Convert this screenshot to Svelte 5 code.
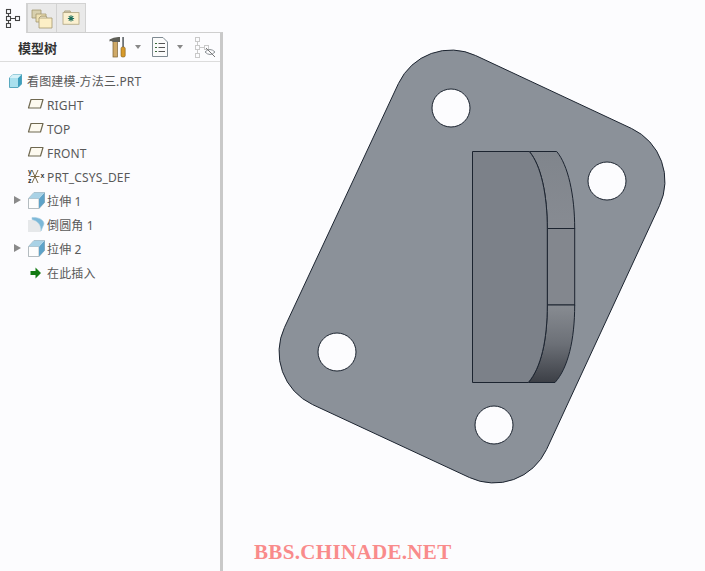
<script>
  const rows = [
    { label: '看图建模-方法三.PRT', icon: 'part', root: true },
    { label: 'RIGHT', icon: 'plane' },
    { label: 'TOP', icon: 'plane' },
    { label: 'FRONT', icon: 'plane' },
    { label: 'PRT_CSYS_DEF', icon: 'csys' },
    { label: '拉伸 1', icon: 'extrude', arrow: true },
    { label: '倒圆角 1', icon: 'round' },
    { label: '拉伸 2', icon: 'extrude', arrow: true },
    { label: '在此插入', icon: 'insert' }
  ];

  const holes = [[451, 108], [607, 181], [337, 352], [494, 425]];
</script>

{#snippet treeIcon(name)}
  <svg class="ticon" width="20" height="18" viewBox="0 0 20 18">
    {#if name === 'part'}
      <path d="M2.5 6 L6 2.5 H14.5 V12 L11 15.5 H2.5 Z" fill="#a9e0ee" stroke="#5aa9bf" stroke-linejoin="round" />
      <path d="M11 6 L14.5 2.5 V12 L11 15.5 Z" fill="#3f9fbd" />
      <path d="M2.5 6 H11 L14.5 2.5 H6 Z" fill="#d5f1f8" />
    {:else if name === 'plane'}
      <path d="M4 3.5 H16 L13.5 12 H1.5 Z" fill="#fdfaf0" stroke="#6f6850" stroke-width="1.2" stroke-linejoin="round" />
    {:else if name === 'csys'}
      <path d="M5 2 L11 15 M11 2 L5 15 M3.5 8.5 H12.5" stroke="#7a6a48" stroke-width="1" fill="none" />
      <text x="1" y="6" class="axis">y</text>
      <text x="1" y="15" class="axis">z</text>
      <text x="13.5" y="10" class="axis">x</text>
    {:else if name === 'extrude'}
      <path d="M1.5 6.5 L7 0.5 H17.5 V10.5 L12 16.5 H1.5 Z" fill="#fafafa" stroke="#a9b3b8" />
      <path d="M1.5 6.5 H12 V16.5 H1.5 Z" fill="#fdfdfd" stroke="#b4bcc0" />
      <path d="M12 6.5 L17.5 0.5 V10.5 L12 16.5 Z" fill="#5ea3c9" />
      <path d="M1.5 6.5 L7 0.5 H17.5 L12 6.5 Z" fill="#a9d2e6" />
    {:else if name === 'round'}
      <path d="M1 4 H8 C12 4 14 9 14 16 H1 Z" fill="#e6e8ea" />
      <path d="M5 1.5 C11 1 17 3.5 17 8 L14 15 C14 9 11 5 5 3.5 Z" fill="#7db8d8" stroke="#a8cfe2" stroke-width="0.6" />
    {:else if name === 'insert'}
      <path d="M3.5 7 H8.5 V3.5 L14 9 L8.5 14.5 V11 H3.5 Z" fill="#127a12" />
    {/if}
  </svg>
{/snippet}

<div class="page">
  <aside class="side">
    <div class="tabs">
      <div class="tab active">
        <svg width="16" height="20" viewBox="0 0 16 20" fill="none" stroke="#444" stroke-width="1.1">
          <rect x="1.5" y="1.5" width="4" height="4" />
          <rect x="1.5" y="8.5" width="4" height="4" />
          <rect x="1.5" y="15.5" width="4" height="4" />
          <rect x="10.5" y="8.5" width="4" height="4" />
          <path d="M3.5 5.5 V8.5 M3.5 12.5 V15.5 M5.5 10.5 H10.5" />
        </svg>
      </div>
      <div class="tab">
        <svg width="22" height="22" viewBox="0 0 22 22" stroke="#a3976f" stroke-width="0.8">
          <path d="M1 3 H10 V11 H1 Z" fill="#d8d0ae" />
          <path d="M5 7 H15 V15 H5 Z" fill="#efe2b4" />
          <path d="M8 11 H21 V21 H8 Z" fill="#fcefc6" />
          <path d="M8 11 L10 9 H15 L16 11" fill="#d9cfae" />
        </svg>
      </div>
      <div class="tab">
        <svg width="18" height="16" viewBox="0 0 20 18" stroke="#a89a72" stroke-width="0.8">
          <path d="M2 3 L3 1 H9 L10 3" fill="#c9c4ae" />
          <rect x="1" y="3" width="18" height="13" fill="#fbf0d0" />
          <path d="M10 6 V13 M6.5 9.5 H13.5 M7.5 7 L12.5 12 M12.5 7 L7.5 12" stroke="#1d6f5c" stroke-width="1.2" />
        </svg>
      </div>
    </div>

    <div class="panel">
      <div class="head">
        <span class="title">模型树</span>
        <div class="tools">
          <svg class="hammer" width="19" height="22" viewBox="0 0 19 22">
            <rect x="4" y="5" width="4.4" height="16" fill="#cfa968" stroke="#7a5f30" stroke-width="0.7" />
            <path d="M0.5 3.5 Q5 0.5 11 1 V6 H4 Q2 4.5 0.5 5.5 Z" fill="#5f5f58" />
            <rect x="13.2" y="1" width="1.8" height="10" fill="#6f7478" />
            <rect x="12" y="11" width="4.2" height="10" rx="1.5" fill="#d79a2a" stroke="#7c5a1c" stroke-width="0.6" />
          </svg>
          <span class="caret"></span>
          <svg class="list" width="16" height="20" viewBox="0 0 16 20" fill="none" stroke="#7f8a92">
            <path d="M0.5 0.5 H11 L15.5 5 V19.5 H0.5 Z" fill="#fbfbfb" />
            <path d="M3 6.5 H5 M3 10.5 H5 M3 14.5 H5" stroke="#3a6a3a" stroke-width="1.2" />
            <path d="M6.5 6.5 H13 M6.5 10.5 H13 M6.5 14.5 H13" stroke="#555" />
          </svg>
          <span class="caret"></span>
          <svg class="hide" width="21" height="21" viewBox="0 0 21 21" fill="none" stroke="#c9c9c9">
            <rect x="0.5" y="0.5" width="4" height="4" />
            <rect x="0.5" y="8.5" width="4" height="4" />
            <rect x="0.5" y="16.5" width="4" height="4" />
            <rect x="9.5" y="8.5" width="4" height="4" />
            <path d="M2.5 4.5 V8.5 M2.5 12.5 V16.5 M4.5 10.5 H9.5" />
            <path d="M10 15 Q15 10 20 15 Q15 20 10 15 Z" stroke="#8d9297" />
            <path d="M11 11 L20 20" stroke="#777" />
          </svg>
        </div>
      </div>

      <ul class="tree">
        {#each rows as row}
          <li class:root={row.root}>
            {#if row.arrow}<span class="arrow"></span>{/if}
            {@render treeIcon(row.icon)}
            <span class="label">{row.label}</span>
          </li>
        {/each}
      </ul>
    </div>
  </aside>

  <main class="view">
    <svg class="canvas" width="482" height="571" viewBox="223 0 482 571">
      <defs>
        <linearGradient id="topBand" x1="0" y1="0" x2="0" y2="1">
          <stop offset="0" stop-color="#80858c" />
          <stop offset="1" stop-color="#878b92" />
        </linearGradient>
        <linearGradient id="lowBand" x1="0" y1="0" x2="0" y2="1">
          <stop offset="0" stop-color="#888c92" />
          <stop offset="0.5" stop-color="#6c7077" />
          <stop offset="1" stop-color="#3c3f46" />
        </linearGradient>
      </defs>

      <path
        class="plate"
        d="M475.6 55.5 L631.6 128.5 A58 58 0 0 1 659.5 205.6 L546.5 449.6 A58 58 0 0 1 469.4 477.5 L312.4 404.5 A58 58 0 0 1 284.5 327.4 L398.5 83.4 A58 58 0 0 1 475.6 55.5 Z"
      />
      {#each holes as [cx, cy]}
        <circle class="hole" {cx} {cy} r="19" />
      {/each}

      <path class="edge" fill="url(#topBand)" d="M529.3 151.5 H556.7 C568 165 574.7 195 574.7 228.5 H547.3 C547.3 195 541 165 529.3 151.5 Z" />
      <rect class="edge" x="547.3" y="228.5" width="27.4" height="76.5" fill="#83878e" />
      <path class="edge" fill="url(#lowBand)" d="M547.3 305 H574.7 C574.7 340 568 368 555 382.5 H528.3 C541 368 547.3 340 547.3 305 Z" />
      <path class="edge" fill="#7c8189" d="M472.5 151.5 H529.3 C541 165 547.3 195 547.3 228.5 V305 C547.3 340 541 368 528.3 382.5 H472.5 Z" />
    </svg>
    <div class="mark">BBS.CHINADE.NET</div>
  </main>
</div>

<style>
  :global(body) {
    margin: 0;
    background: #fcfcfe;
  }

  .page {
    display: flex;
    width: 705px;
    height: 571px;
    overflow: hidden;
    background: #fcfcfe;
    font-family: "Noto Sans", "Noto Sans CJK SC", sans-serif;
  }

  .side {
    width: 223px;
    flex: none;
    display: flex;
    flex-direction: column;
  }

  .tabs {
    display: flex;
    height: 32px;
    padding-top: 3px;
    box-sizing: border-box;
  }
  .tab {
    width: 30px;
    display: flex;
    align-items: center;
    justify-content: center;
    background: #e9e9e9;
    border: 1px solid #d2d2d2;
    border-bottom: none;
    box-sizing: border-box;
    margin-left: -1px;
  }
  .tab:nth-child(2) {
    margin-left: 0;
  }
  .tab.active {
    width: 27px;
    margin-left: 0;
    height: 30px;
    background: #fcfcfe;
    border-left: none;
    border-top: none;
    position: relative;
    z-index: 1;
  }

  .panel {
    flex: 1;
    border-top: 1px solid #cfcfcf;
    border-right: 3px solid #c9c9c9;
  }

  .head {
    height: 28px;
    display: flex;
    align-items: center;
    justify-content: space-between;
    padding-left: 18px;
    border-bottom: 1px solid #dcdcdc;
  }
  .title {
    font-size: 13px;
    font-weight: 700;
    color: #333;
  }
  .tools {
    display: flex;
    align-items: center;
    margin-right: 4px;
  }
  .hammer {
    margin-right: 7px;
  }
  .caret {
    width: 0;
    height: 0;
    border-left: 3.5px solid transparent;
    border-right: 3.5px solid transparent;
    border-top: 4px solid #888;
    margin-right: 11px;
  }
  .list {
    margin-right: 9px;
  }
  .hide {
    margin-left: 1px;
  }

  .tree {
    list-style: none;
    margin: 0;
    padding: 7px 0 0;
  }
  .tree li {
    position: relative;
    display: flex;
    align-items: center;
    height: 24px;
    padding-left: 27px;
    font-size: 12px;
    letter-spacing: 0.15px;
    color: #595959;
    white-space: nowrap;
  }
  .tree li.root {
    padding-left: 7px;
  }
  .ticon {
    flex: none;
  }
  .axis {
    font-size: 7px;
    font-weight: 700;
    fill: #333;
    font-family: "Liberation Sans", sans-serif;
  }
  .arrow {
    position: absolute;
    left: 14px;
    top: 7px;
    width: 0;
    height: 0;
    border-top: 4.5px solid transparent;
    border-bottom: 4.5px solid transparent;
    border-left: 7px solid #8a8a8a;
  }

  .view {
    position: relative;
    flex: 1;
  }
  .canvas {
    display: block;
  }
  .plate {
    fill: #8b9199;
    stroke: #1c2430;
    stroke-width: 1;
  }
  .hole {
    fill: #fcfcfe;
    stroke: #1c2430;
    stroke-width: 1;
  }
  .edge {
    stroke: #1c2430;
    stroke-width: 1;
  }

  .mark {
    position: absolute;
    left: 31px;
    top: 540px;
    font-family: "Liberation Serif", serif;
    font-size: 21px;
    font-weight: 700;
    letter-spacing: 0.33px;
    color: #f98b8b;
    white-space: nowrap;
  }
</style>
